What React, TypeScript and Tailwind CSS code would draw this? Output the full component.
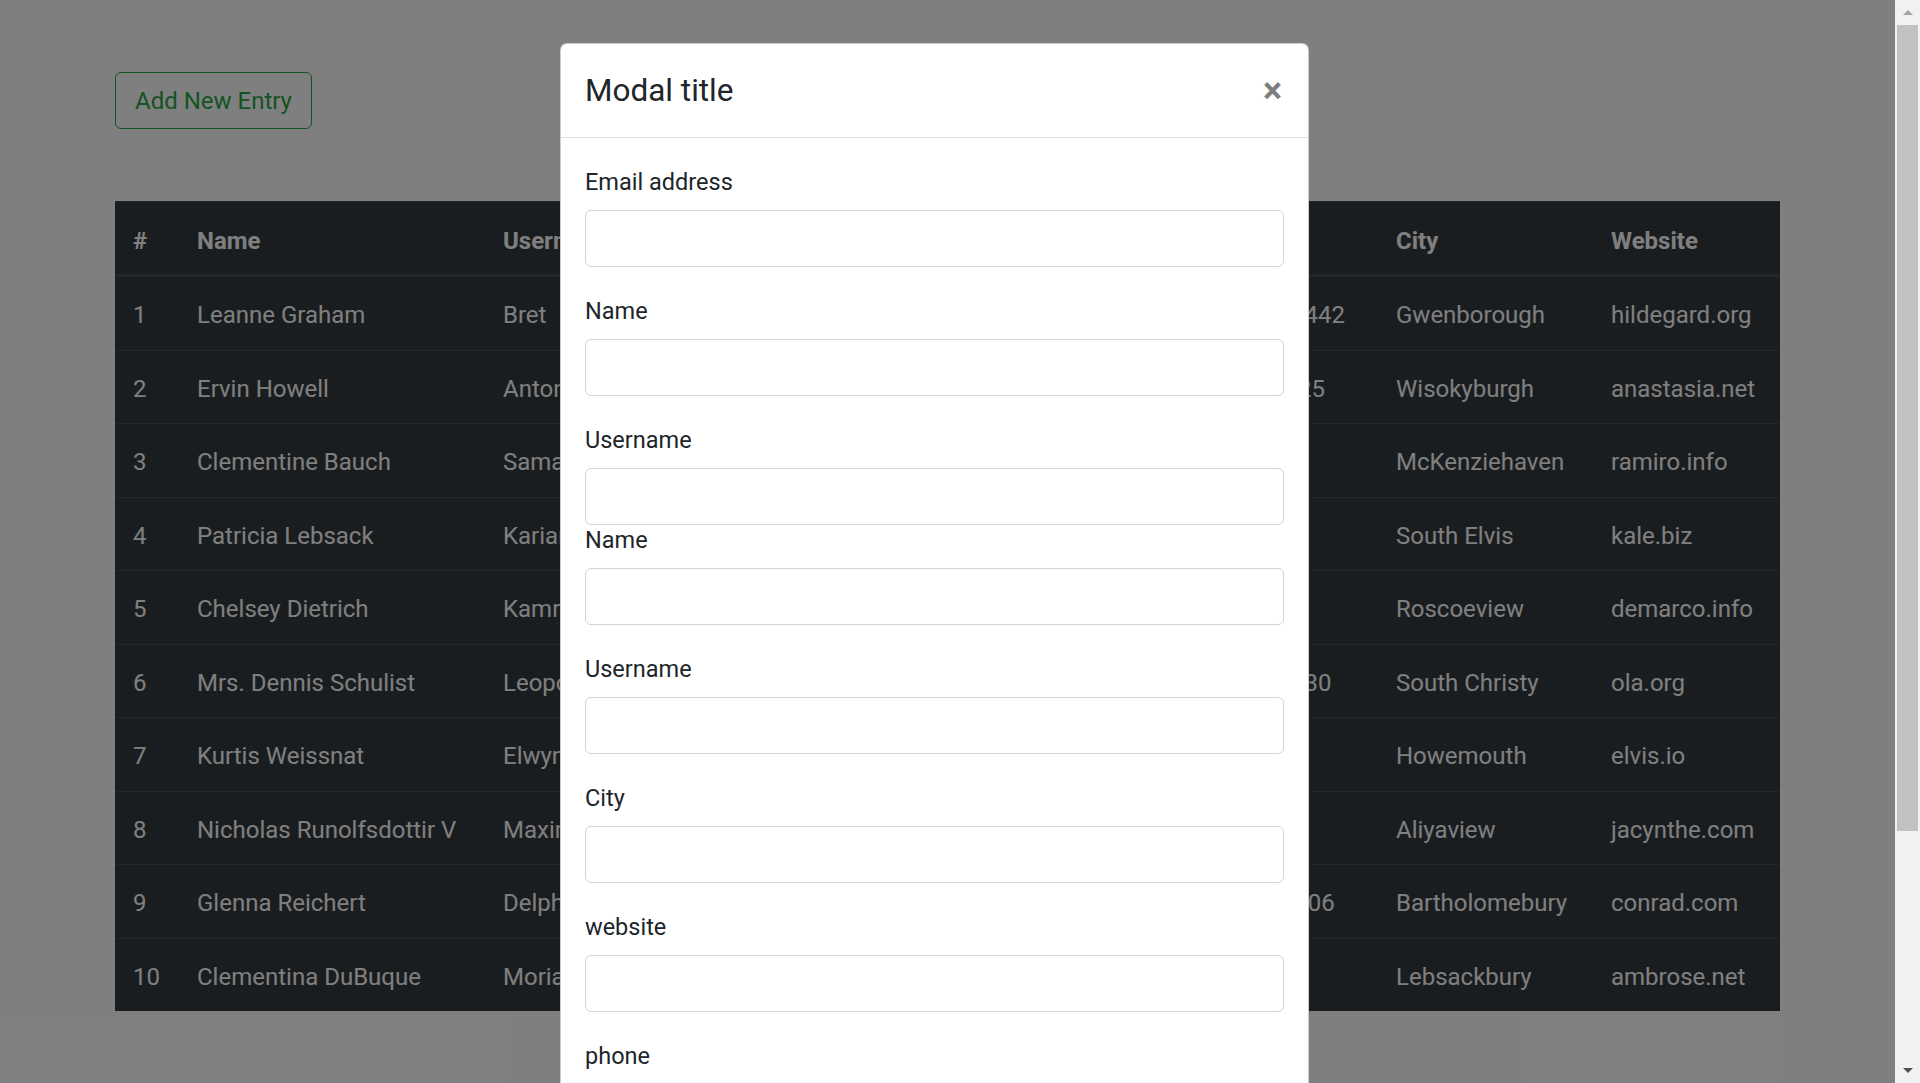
import React from "react";

const USERS = [
  { id: 1, name: "Leanne Graham", username: "Bret", email: "Sincere@april.biz", phone: "1-770-736-8031 x56442", city: "Gwenborough", website: "hildegard.org" },
  { id: 2, name: "Ervin Howell", username: "Antonette", email: "Shanna@melissa.tv", phone: "010-692-6593 x09125", city: "Wisokyburgh", website: "anastasia.net" },
  { id: 3, name: "Clementine Bauch", username: "Samantha", email: "Nathan@yesenia.net", phone: "1-463-123-4447", city: "McKenziehaven", website: "ramiro.info" },
  { id: 4, name: "Patricia Lebsack", username: "Karianne", email: "Julianne.OConner@kory.org", phone: "493-170-9623 x156", city: "South Elvis", website: "kale.biz" },
  { id: 5, name: "Chelsey Dietrich", username: "Kamren", email: "Lucio_Hettinger@annie.ca", phone: "(254)954-1289", city: "Roscoeview", website: "demarco.info" },
  { id: 6, name: "Mrs. Dennis Schulist", username: "Leopoldo_Corkery", email: "Karley_Dach@jasper.info", phone: "1-477-935-8478 x6430", city: "South Christy", website: "ola.org" },
  { id: 7, name: "Kurtis Weissnat", username: "Elwyn.Skiles", email: "Telly.Hoeger@billy.biz", phone: "210.067.6132", city: "Howemouth", website: "elvis.io" },
  { id: 8, name: "Nicholas Runolfsdottir V", username: "Maxime_Nienow", email: "Sherwood@rosamond.me", phone: "586.493.6943 x140", city: "Aliyaview", website: "jacynthe.com" },
  { id: 9, name: "Glenna Reichert", username: "Delphine", email: "Chaim_McDermott@dana.io", phone: "(775)976-6794 x41206", city: "Bartholomebury", website: "conrad.com" },
  { id: 10, name: "Clementina DuBuque", username: "Moriah.Stanton", email: "Rey.Padberg@karina.biz", phone: "024-648-3804", city: "Lebsackbury", website: "ambrose.net" },
];

// the third group has no bottom margin and the one after it sits tight under it
const FIELDS = [
  { label: "Email address", gap: true, tight: false },
  { label: "Name", gap: true, tight: false },
  { label: "Username", gap: false, tight: false },
  { label: "Name", gap: true, tight: true },
  { label: "Username", gap: true, tight: false },
  { label: "City", gap: true, tight: false },
  { label: "website", gap: true, tight: false },
  { label: "phone", gap: true, tight: false },
];

function UsersTable() {
  const th = "px-[18px] pt-[21px] pb-[15px] leading-[36px] text-left font-bold whitespace-nowrap border-t border-b-[3px] border-[#454d55]";
  const td = "px-[18px] pt-[20px] pb-[16px] leading-[36.5px] whitespace-nowrap border-t border-[#454d55]";
  return (
    <table className="mt-[72px] w-full border-collapse bg-[#343a40] text-white text-[24px]">
      <thead>
        <tr>
          <th className={`${th} w-[64px]`}>#</th>
          <th className={`${th} w-[306px]`}>Name</th>
          <th className={`${th} w-[240px]`}>Username</th>
          <th className={th}>Email</th>
          <th className={`${th} w-px pr-[33px]`}>Phone</th>
          <th className={`${th} w-[215px]`}>City</th>
          <th className={`${th} w-[187px]`}>Website</th>
        </tr>
      </thead>
      <tbody>
        {USERS.map((u) => (
          <tr key={u.id}>
            <td className={td}>{u.id}</td>
            <td className={td}>{u.name}</td>
            <td className={td}>{u.username}</td>
            <td className={td}>{u.email}</td>
            <td className={`${td} pr-[33px]`}>{u.phone}</td>
            <td className={td}>{u.city}</td>
            <td className={td}>{u.website}</td>
          </tr>
        ))}
      </tbody>
    </table>
  );
}

function Modal() {
  return (
    <div className="absolute left-[560px] top-[43px] w-[749px] rounded-[7px] border border-black/20 bg-white text-[#212529]">
      <div className="flex items-start justify-between border-b border-[#dee2e6] px-[24px] pt-[24px] pb-[23px]">
        <h5 className="pt-[1px] text-[31.5px] font-normal leading-[44px]">Modal title</h5>
        <button className="mt-[1px] mr-[2px] text-[36px] font-bold leading-[45px] text-black opacity-50">
          ×
        </button>
      </div>
      <div className="p-[24px]">
        {FIELDS.map((f, i) => (
          <div key={i} className={f.gap ? "mb-[24px]" : ""}>
            <label
              className={
                f.tight
                  ? "mb-[13px] block text-[23.5px] leading-[30px]"
                  : "mb-[10px] block pt-[2px] text-[23.5px] leading-[36px]"
              }
            >
              {f.label}
            </label>
            <input
              type="text"
              className="block h-[57px] w-full rounded-[6px] border border-[#ced4da] bg-white px-[18px] text-[24px]"
            />
          </div>
        ))}
      </div>
    </div>
  );
}

function Scrollbar() {
  return (
    <div className="flex w-[25px] flex-col bg-[#f1f1f1]">
      <div className="flex h-[25px] items-center justify-center">
        <svg width="10" height="6" viewBox="0 0 10 6">
          <path d="M5 0 L10 5 L0 5 Z" fill="#a3a3a3" />
        </svg>
      </div>
      <div className="ml-[2px] mr-[2px] h-[806px] bg-[#c1c1c1]" />
      <div className="flex-1" />
      <div className="flex h-[25px] items-center justify-center">
        <svg width="10" height="6" viewBox="0 0 10 6">
          <path d="M0 0 L10 0 L5 5 Z" fill="#505050" />
        </svg>
      </div>
    </div>
  );
}

export default function App() {
  return (
    <div
      className="flex h-[1083px] w-[1920px] overflow-hidden bg-white"
      style={{ fontFamily: "Roboto, 'Liberation Sans', sans-serif" }}
    >
      <div className="relative flex-1 overflow-hidden">
        <div className="mx-auto w-[1710px] px-[22.5px] pt-[72px]">
          <button className="h-[57px] rounded-[6px] border border-[#28a745] px-[19px] pt-[1px] text-[24px] leading-[36px] text-[#28a745]">
            Add New Entry
          </button>
          <UsersTable />
        </div>
        <div className="absolute inset-0 bg-black/50" />
        <Modal />
      </div>
      <Scrollbar />
    </div>
  );
}
